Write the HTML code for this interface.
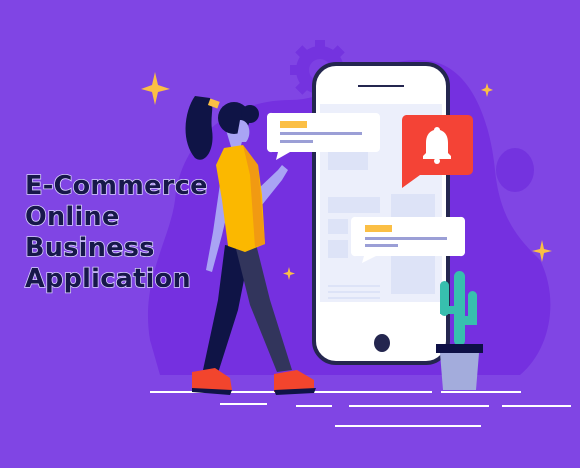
<!DOCTYPE html>
<html><head><meta charset="utf-8"><style>
html,body{margin:0;padding:0;width:580px;height:468px;overflow:hidden;background:#8045e4}
svg{display:block}
.t{font-family:"DejaVu Sans","Liberation Sans",sans-serif;font-weight:bold;font-size:25.5px;fill:#17184a;stroke:#d9d0ff;stroke-width:1.6px;paint-order:stroke;letter-spacing:0.3px}
</style></head><body>
<svg width="580" height="468" viewBox="0 0 580 468">
<rect width="580" height="468" fill="#8045e4"/>
<path d="M150 340 C140 280 170 240 175 200 C180 140 230 100 290 100 C340 100 360 60 420 60 C470 60 490 120 495 170 C500 220 520 240 540 260 C560 300 550 350 520 375 L160 375 Z" fill="#7530e0"/>
<g fill="#7433df">
<circle cx="320" cy="70" r="24"/>
<rect x="315" y="40" width="10" height="60"/>
<rect x="290" y="65" width="60" height="10"/>
<rect x="315" y="40" width="10" height="60" transform="rotate(45 320 70)"/>
<rect x="315" y="40" width="10" height="60" transform="rotate(-45 320 70)"/>
</g>
<circle cx="320" cy="70" r="11" fill="#7d40e3"/>
<ellipse cx="515" cy="170" rx="19" ry="22" fill="#7433df"/>
<g fill="#fbbf45">
<path d="M155 72 L158 85 L170 89 L158 92 L155 105 L152 92 L141 89 L152 85Z"/>
<path d="M487 83 L488.5 88 L493 90 L488.5 91.5 L487 97 L485.5 91.5 L481 90 L485.5 88Z"/>
<path d="M542 240 L544 249 L552 251 L544 253 L542 262 L540 253 L532 251 L540 249Z"/>
<path d="M289 267 L290.3 272 L295 273.5 L290.3 275 L289 280 L287.7 275 L283 273.5 L287.7 272Z"/>
</g>
<rect x="314" y="64" width="134" height="299" rx="22" fill="#fff" stroke="#24264f" stroke-width="4"/>
<rect x="358" y="85" width="46" height="2" fill="#24264f"/>
<rect x="320" y="104" width="122" height="198" fill="#eceffb"/>
<rect x="328" y="197" width="52" height="16" fill="#dde3f7"/>
<rect x="328" y="219" width="20" height="15" fill="#dde3f7"/>
<rect x="328" y="240" width="20" height="18" fill="#dde3f7"/>
<rect x="391" y="194" width="44" height="100" fill="#dde3f7"/>
<rect x="328" y="152" width="40" height="18" fill="#dde3f7"/>
<g fill="#dde3f7"><rect x="328" y="285" width="52" height="2"/><rect x="328" y="291" width="52" height="2"/><rect x="328" y="297" width="52" height="2"/></g>
<ellipse cx="382" cy="343" rx="8" ry="9" fill="#24264f"/>
<path d="M272 113 H376 A4 4 0 0 1 380 117 V148 A4 4 0 0 1 376 152 H290 L276 160 L278 152 H272 A4 4 0 0 1 267 148 V117 A4 4 0 0 1 272 113Z" fill="#fff"/>
<rect x="280" y="121" width="27" height="7" fill="#fbbf45"/>
<rect x="280" y="132" width="82" height="3" fill="#9b9fd6"/>
<rect x="280" y="140" width="33" height="3" fill="#9b9fd6"/>
<path d="M406 115 H468 A5 5 0 0 1 473 120 V170 A5 5 0 0 1 468 175 H420 L402 188 V120 A5 5 0 0 1 406 115Z" fill="#f44336"/>
<path d="M437 127 a3 3 0 0 1 3 3 c6 2 8 7 8 13 v10 l3 3 v3 h-28 v-3 l3 -3 v-10 c0 -6 2 -11 8 -13 a3 3 0 0 1 3 -3z" fill="#fff"/>
<circle cx="437" cy="161" r="3" fill="#fff"/>
<path d="M356 217 H460 A4 4 0 0 1 465 221 V252 A4 4 0 0 1 460 256 H376 L362 263 L364 256 H356 A4 4 0 0 1 351 252 V221 A4 4 0 0 1 356 217Z" fill="#fff"/>
<rect x="365" y="225" width="27" height="7" fill="#fbbf45"/>
<rect x="365" y="237" width="82" height="3" fill="#9b9fd6"/>
<rect x="365" y="244" width="33" height="3" fill="#9b9fd6"/>
<g fill="#37bfae">
<rect x="454" y="271" width="11" height="75" rx="5.5"/>
<rect x="440" y="281" width="9" height="35" rx="4.5"/>
<rect x="468" y="291" width="9" height="34" rx="4.5"/>
<rect x="440" y="306" width="20" height="8"/>
<rect x="460" y="316" width="17" height="9"/>
</g>
<rect x="436" y="344" width="47" height="9" fill="#0e1046"/>
<path d="M440 353 H479 L476 390 H443Z" fill="#a3acdc"/>
<g fill="#fff">
<rect x="150" y="391" width="282" height="2"/>
<rect x="441" y="391" width="80" height="2"/>
<rect x="220" y="403" width="47" height="2"/>
<rect x="296" y="405" width="36" height="2"/>
<rect x="349" y="405" width="140" height="2"/>
<rect x="502" y="405" width="69" height="2"/>
<rect x="335" y="425" width="146" height="2"/>
</g>
<path d="M195 96 C185 110 180 140 195 158 C205 165 215 150 212 130 C210 115 215 105 210 98Z" fill="#0f1446"/>
<rect x="209" y="100" width="10" height="7" fill="#fbbf45" transform="rotate(20 214 103)"/>
<path d="M226 130 L232 150 L240 150 L245 128 Z" fill="#a9a4f4"/>
<circle cx="234" cy="118" r="16" fill="#0f1446"/>
<circle cx="250" cy="114" r="9" fill="#0f1446"/>
<path d="M240 120 C250 120 252 135 246 142 L236 142Z" fill="#a9a4f4"/>
<path d="M225 245 L218 300 L203 370 L218 373 L238 310 L250 250Z" fill="#0f1446"/>
<path d="M235 245 L255 240 L270 300 L292 370 L277 372 L250 305Z" fill="#32355c"/>
<path d="M257 190 L278 170 L282 165 L288 170 L282 180 L262 205Z" fill="#a9a4f4"/>
<path d="M222 170 L213 232 L206 270 L212 272 L222 235 L235 180Z" fill="#a9a4f4"/>
<path d="M224 148 L243 145 L258 165 L262 195 L265 244 L245 252 L228 246 L222 200 L216 165Z" fill="#fbb800"/>
<path d="M243 145 L258 165 L265 244 L255 247 L250 175Z" fill="#f19a12"/>
<path d="M192 372 L215 368 L230 378 L232 390 L192 390 Z" fill="#f2452d"/>
<path d="M274 374 L297 370 L314 380 L314 390 L274 392 Z" fill="#f2452d"/>
<path d="M192 388 L232 390 L230 395 L192 392Z" fill="#0f1446"/>
<path d="M274 390 L316 388 L314 393 L276 395Z" fill="#0f1446"/>
<text class="t" x="25" y="194">E-Commerce</text>
<text class="t" x="25" y="225">Online</text>
<text class="t" x="25" y="256">Business</text>
<text class="t" x="25" y="287">Application</text>
</svg>
</body></html>
